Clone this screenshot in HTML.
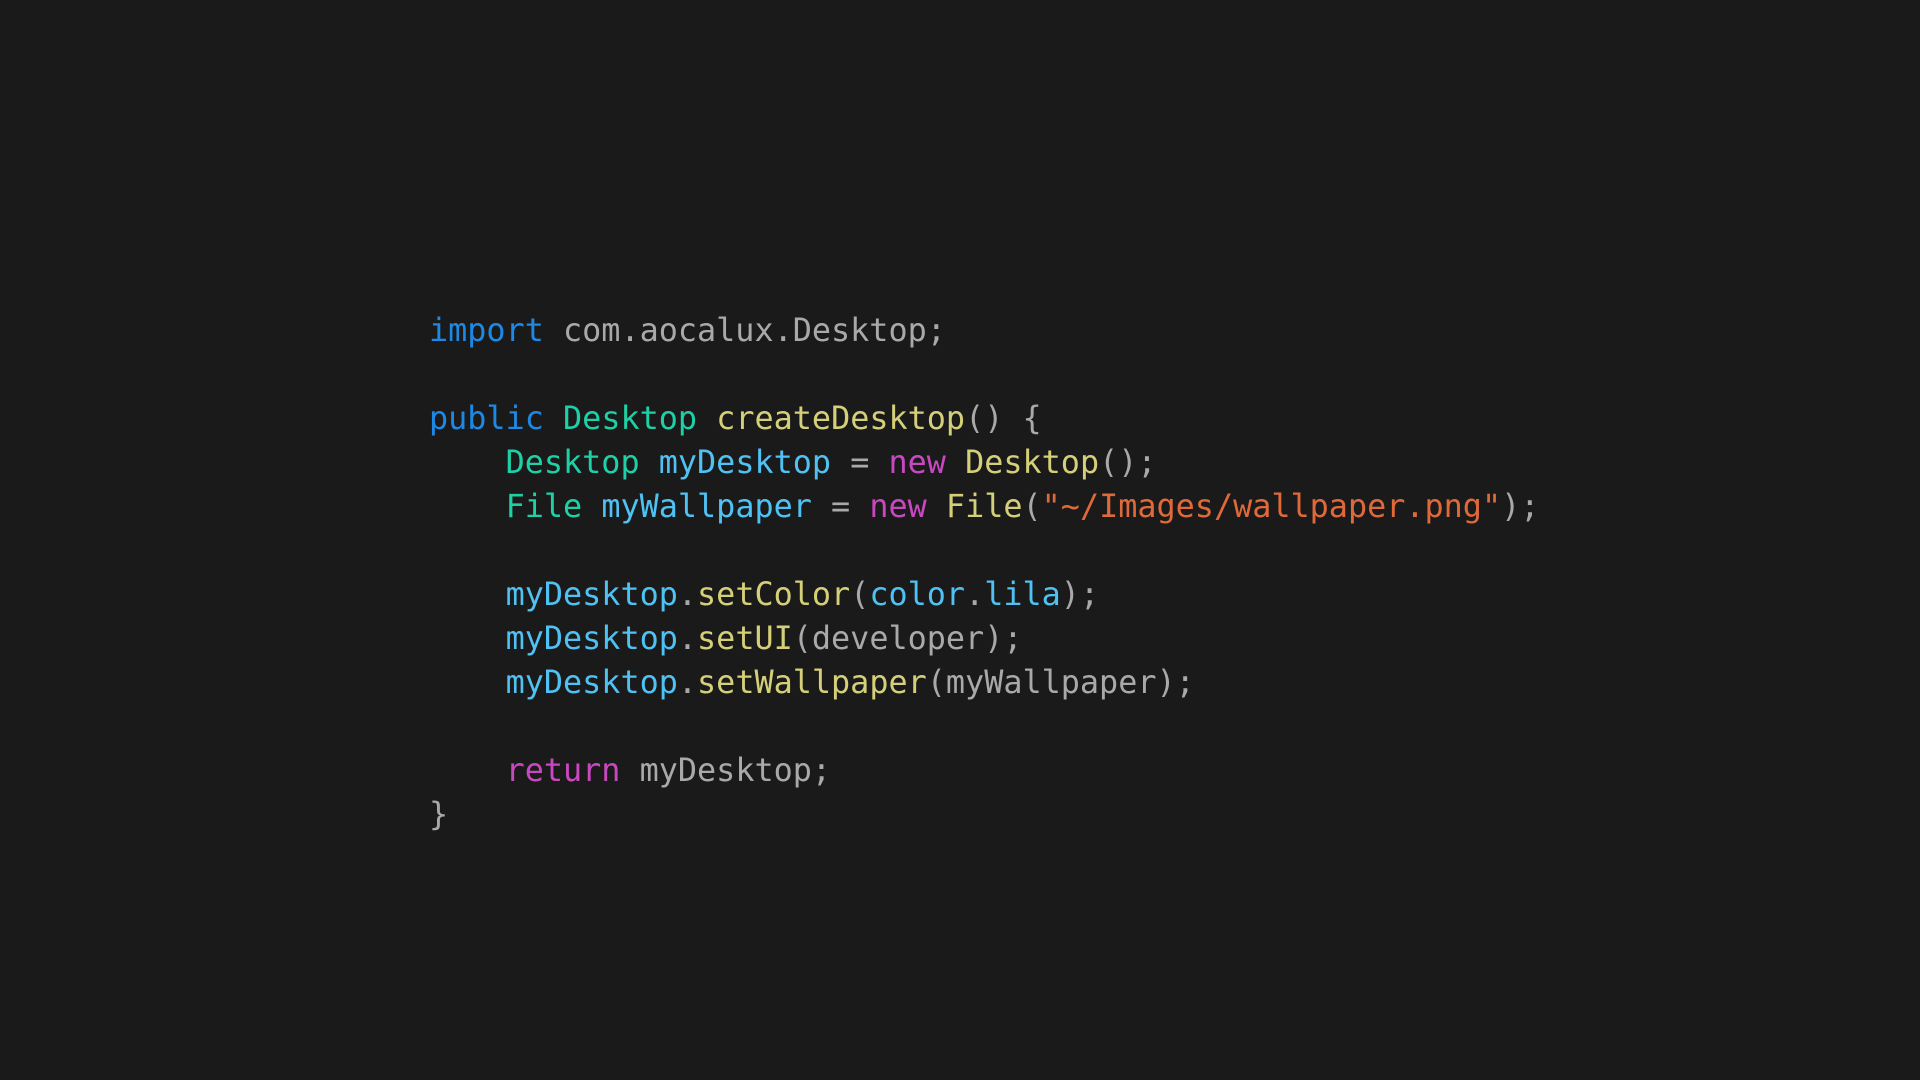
<!DOCTYPE html>
<html><head><style>
html,body{margin:0;width:1920px;height:1080px;background:#1a1a1a;overflow:hidden}
pre{position:absolute;left:429px;top:309px;margin:0;font-family:"DejaVu Sans Mono",monospace;font-size:31.8px;line-height:44px;color:#a9a9a9}
.k{color:#1e88e5}.t{color:#1ed0a6}.f{color:#d4cf78}.p{color:#c848c0}.v{color:#4fc1f2}.s{color:#e0693a}
</style></head><body>
<pre><span class="k">import</span> com.aocalux.Desktop;

<span class="k">public</span> <span class="t">Desktop</span> <span class="f">createDesktop</span>() {
    <span class="t">Desktop</span> <span class="v">myDesktop</span> = <span class="p">new</span> <span class="f">Desktop</span>();
    <span class="t">File</span> <span class="v">myWallpaper</span> = <span class="p">new</span> <span class="f">File</span>(<span class="s">"~/Images/wallpaper.png"</span>);

    <span class="v">myDesktop</span>.<span class="f">setColor</span>(<span class="v">color</span>.<span class="v">lila</span>);
    <span class="v">myDesktop</span>.<span class="f">setUI</span>(developer);
    <span class="v">myDesktop</span>.<span class="f">setWallpaper</span>(myWallpaper);

    <span class="p">return</span> myDesktop;
}</pre>
</body></html>
